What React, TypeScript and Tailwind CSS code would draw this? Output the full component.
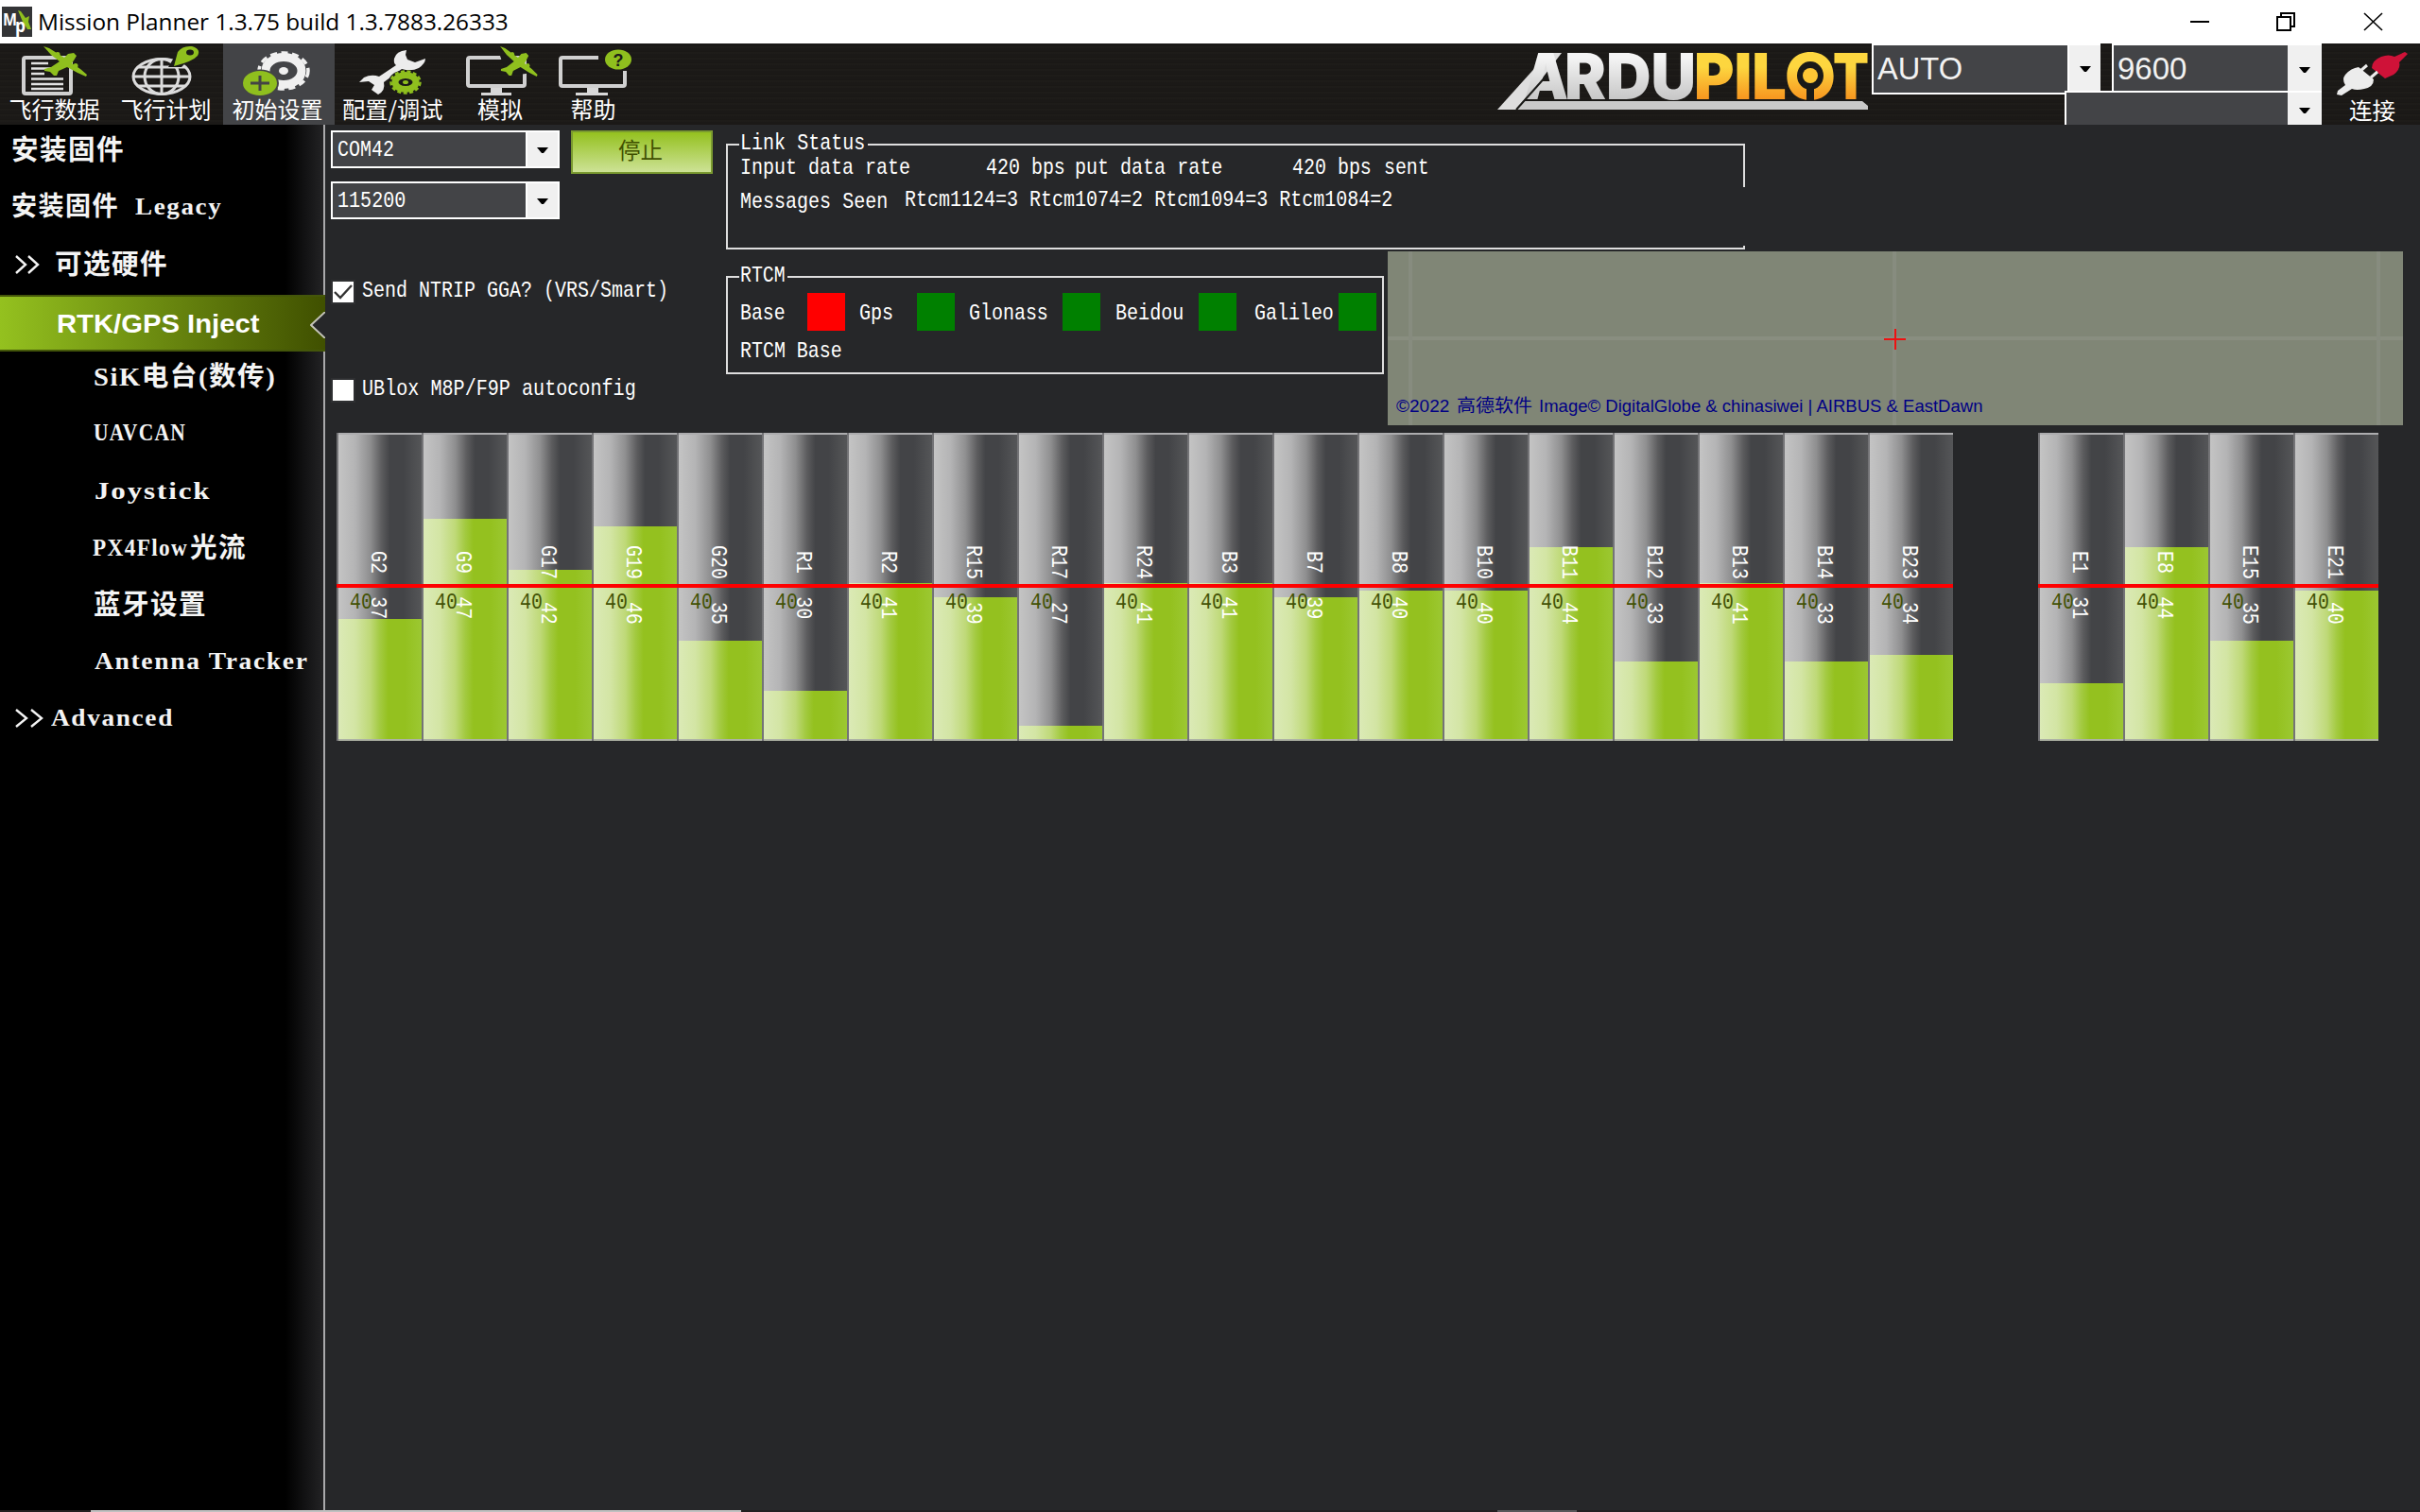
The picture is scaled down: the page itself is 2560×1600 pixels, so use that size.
import React, { useLayoutEffect, useRef, useState } from "react";

/* Single line of text squeezed or stretched to a given width. */
function Fit({ w, children, className = "" }: { w: number; children: string; className?: string }) {
  const ref = useRef<HTMLSpanElement>(null);
  const [scale, setScale] = useState(1);
  useLayoutEffect(() => {
    if (ref.current && ref.current.offsetWidth) setScale(w / ref.current.offsetWidth);
  }, [w, children]);
  return (
    <span className={"block shrink-0 whitespace-pre " + className} style={{ width: w }}>
      <span ref={ref} className="inline-block origin-left align-top" style={{ transform: `scaleX(${scale})` }}>
        {children}
      </span>
    </span>
  );
}

const MONO = "font-['Liberation_Mono','Noto_Sans_CJK_SC',monospace] text-[24px] leading-[24px] h-[24px]";

function Mono({ w, children, className = "text-white" }: { w: number; children: string; className?: string }) {
  return <Fit w={w} className={MONO + " " + className}>{children}</Fit>;
}

/* ---------- icons ---------- */

function Plane() {
  return (
    <g fill="#8fbf1e">
      <path d="M28 2 L34 4 L50 14 L54 10 L60 9 L63 12 L60 17 L58 20 L67 26 L74 32 L73 34 L64 30 L53 24 L44 28 L42 33 L39 33 L35 29 L29 28 L29 26 L36 24 L45 18 L36 11 Z" />
      <circle cx="43" cy="10.500" r="2.500" />
      <circle cx="62" cy="22.500" r="2.500" />
    </g>
  );
}

function FlightDataIcon() {
  return (
    <svg width="80" height="56" viewBox="0 0 80 56">
      <rect x="7" y="14" width="50" height="38" rx="2" fill="none" stroke="#d0d0d0" strokeWidth="4" />
      <path d="M15 20h18M15 25.500h22M15 31h14M15 36.500h34M15 42h34M15 47h34" stroke="#e2e2e2" strokeWidth="2.400" />
      <Plane />
    </svg>
  );
}

function FlightPlanIcon() {
  return (
    <svg width="80" height="56" viewBox="0 0 80 56">
      <g fill="none" stroke="#dcdcdc" strokeWidth="3">
        <ellipse cx="35" cy="34" rx="30" ry="18.500" />
        <ellipse cx="35" cy="34" rx="18" ry="18.500" />
        <path d="M35 15v38M5 34h60M10 24h50M10 44h50" />
      </g>
      <path d="M42 24 L51 9 L66 14 L56 24Z" fill="#1a1a18" />
      <path d="M48 23 L52 8 Q57 1 67 2 Q77 5 73 12 Q68 18 48 23Z" fill="#8fbf1e" />
      <ellipse cx="65" cy="8.500" rx="4" ry="3" fill="#1a1a18" />
    </svg>
  );
}

function SetupIcon() {
  return (
    <svg width="80" height="56" viewBox="0 0 80 56">
      <ellipse cx="46" cy="28" rx="19" ry="14.500" fill="none" stroke="#f0f0f0" strokeWidth="9" />
      <ellipse cx="46" cy="28" rx="26" ry="19" fill="none" stroke="#f0f0f0" strokeWidth="3.500" strokeDasharray="7 4.500" />
      <ellipse cx="46" cy="28" rx="5" ry="4" fill="#f0f0f0" />
      <ellipse cx="21" cy="41" rx="20" ry="14.500" fill="#434445" />
      <ellipse cx="21" cy="41" rx="18" ry="13" fill="#8fbf1e" />
      <path d="M21 33v16M11 41h20" stroke="#434445" strokeWidth="3" />
    </svg>
  );
}

function ConfigIcon() {
  return (
    <svg width="80" height="56" viewBox="0 0 80 56">
      <path
        d="M55 6 Q44 7 42 15 Q41 20 44 22 L26 34 Q18 31 10 35 L5 40 L15 39 L21 43 L18 48 L25 53 Q33 49 31 40 L50 26 Q60 29 68 25 Q75 20 75 15 L64 19 L56 16 L54 11Z"
        fill="#ececec"
      />
      <ellipse cx="54" cy="40" rx="18" ry="13" fill="#1a1a18" />
      <ellipse cx="54" cy="40" rx="11" ry="7.500" fill="none" stroke="#8fbf1e" strokeWidth="7" />
      <ellipse cx="54" cy="40" rx="15.500" ry="11.500" fill="none" stroke="#8fbf1e" strokeWidth="2.500" strokeDasharray="4 2.500" />
      <ellipse cx="54" cy="40" rx="3" ry="2" fill="#8fbf1e" />
    </svg>
  );
}

function Monitor() {
  return (
    <g>
      <rect x="6" y="14" width="60" height="30" rx="2" fill="none" stroke="#d0d0d0" strokeWidth="4" />
      <path d="M30 46h12v5h10v3H20v-3h10z" fill="#d8d8d8" />
    </g>
  );
}

function SimulationIcon() {
  return (
    <svg width="80" height="56" viewBox="0 0 80 56" className="overflow-visible">
      <Monitor />
      <path d="M40 12 L52 10 L74 30 L60 32 L46 30 Z" fill="#1a1a18" />
      <g transform="translate(16 0) scale(0.860 1)"><Plane /></g>
    </svg>
  );
}

function HelpIcon() {
  return (
    <svg width="86" height="56" viewBox="0 0 86 56">
      <g transform="translate(2 0)">
        <path d="M46 14H8Q6 14 6 16V42Q6 44 8 44H72Q74 44 74 42V28" fill="none" stroke="#d0d0d0" strokeWidth="4" />
        <path d="M34 46h12v5h10v3H22v-3h12z" fill="#d8d8d8" />
      </g>
      <ellipse cx="69" cy="16" rx="14" ry="10.500" fill="#8fbf1e" />
      <text x="69" y="22.500" textAnchor="middle" className="font-['Liberation_Sans',sans-serif] text-[18px] font-bold" fill="#1a1a18">?</text>
    </svg>
  );
}

function PlugIcon() {
  return (
    <svg width="82" height="48" viewBox="0 0 82 48">
      <path d="M76 1 L79 3 L70 12 Q72 19 64 25 L55 29 L41 18 Q41 10 51 6 Q59 3 65 6Z" fill="#cf1238" />
      <path d="M13 25 Q19 18 27 17 L43 30 Q43 38 33 40 Q25 42 20 40 L9 47 L4 46 L5 42 L13 36 Q9 30 13 25Z" fill="#ececec" />
      <path d="M29 21l7-6M40 28l7-6" stroke="#ececec" strokeWidth="3" />
    </svg>
  );
}

function ArduPilotLogo() {
  return (
    <svg width="400" height="86" viewBox="0 0 400 86" className="overflow-visible font-['Inter','Liberation_Sans',sans-serif] text-[67px] font-black">
      <defs>
        <linearGradient id="silver" gradientUnits="userSpaceOnUse" x1="0" y1="10" x2="0" y2="60">
          <stop offset="0.1" stopColor="#f4f4f4" />
          <stop offset="1" stopColor="#c6c6c6" />
        </linearGradient>
        <linearGradient id="gold" gradientUnits="userSpaceOnUse" x1="0" y1="10" x2="0" y2="60">
          <stop offset="0.3" stopColor="#fdd63f" />
          <stop offset="1" stopColor="#f7941e" />
        </linearGradient>
      </defs>
      <path d="M4 70 L58 10 H72 L52 36 L24 70Z" fill="#dedede" />
      <path d="M24 70 L33 61 H390 L396 66 V70Z" fill="#c9c9c9" />
      <g fill="url(#silver)">
        <text x="32" y="59" textLength="47" lengthAdjust="spacingAndGlyphs">A</text>
        <text x="75" y="59" textLength="139" lengthAdjust="spacingAndGlyphs">RDU</text>
      </g>
      <g fill="url(#gold)">
        <text x="212" y="59" textLength="98" lengthAdjust="spacingAndGlyphs">PIL</text>
        <text x="308" y="59" textLength="54" lengthAdjust="spacingAndGlyphs">O</text>
        <text x="359" y="59" textLength="38" lengthAdjust="spacingAndGlyphs">T</text>
      </g>
      <ellipse cx="335" cy="34" rx="14" ry="15" fill="#1a1a18" />
      <path d="M331 44h8v16h-8z" fill="#1a1a18" />
      <circle cx="335" cy="34" r="8" fill="#fdc735" />
      <path d="M24 70 L56 34" stroke="#1a1a18" strokeWidth="2" />
    </svg>
  );
}

function Arrow() {
  return (
    <svg width="12" height="6" viewBox="0 0 12 6"><path d="M0 0h12L7 6H5z" fill="#000" /></svg>
  );
}

/* ---------- toolbar ---------- */

const CJK_LABEL = "font-['Noto_Sans_CJK_SC',sans-serif] text-[24px] leading-[28px] text-white";

function Tool({ icon, label, w, tw, active }: { icon: React.ReactNode; label: string; w: number; tw: number; active?: boolean }) {
  return (
    <div className={"flex h-full shrink-0 flex-col items-center pr-[3px] pt-px " + (active ? "bg-[#434447]" : "")} style={{ width: w }}>
      <div>{icon}</div>
      <Fit w={tw} className={CJK_LABEL + " h-[28px] -mt-[2px]"}>{label}</Fit>
    </div>
  );
}

function Toolbar() {
  return (
    <div className="flex h-[86px] shrink-0 bg-[#1b1917] bg-[repeating-linear-gradient(0deg,#1b1917_0px,#1b1917_3px,#201e1b_4px,#181614_6px)]">
      <Tool icon={<FlightDataIcon />} label="飞行数据" w={118} tw={96} />
      <Tool icon={<FlightPlanIcon />} label="飞行计划" w={118} tw={96} />
      <Tool icon={<SetupIcon />} label="初始设置" w={118} tw={96} active />
      <Tool icon={<ConfigIcon />} label="配置/调试" w={125} tw={106} />
      <Tool icon={<SimulationIcon />} label="模拟" w={103} tw={48} />
      <Tool icon={<HelpIcon />} label="帮助" w={94} tw={48} />
      <div className="ml-auto flex">
        <ArduPilotLogo />
        <div className="grid w-[476px] grid-cols-[204px_50px_222px] grid-rows-[50px_36px]">
          <div className="col-span-2 flex h-[54px] w-[242px] border-2 border-r-0 border-white bg-[#434447]">
            <Fit w={90} className="ml-1 mt-[7px] h-[36px] font-['Liberation_Sans',sans-serif] text-[33px] leading-[36px] text-[#f2f2f2]">AUTO</Fit>
            <div className="ml-auto flex w-[35px] items-center justify-center border-l-2 border-white bg-[#f0f0f0]"><Arrow /></div>
          </div>
          <div className="flex border-2 border-b-0 border-r-0 border-white bg-[#434447]">
            <Fit w={73} className="ml-1 mt-[7px] h-[36px] font-['Liberation_Sans',sans-serif] text-[33px] leading-[36px] text-[#f2f2f2]">9600</Fit>
            <div className="ml-auto flex w-[36px] items-center justify-center bg-[#f0f0f0] pt-1"><Arrow /></div>
          </div>
          <div />
          <div className="relative col-span-2 flex border-l-2 border-t-2 border-white bg-[#434447]">
            <div className="ml-auto flex w-[36px] items-center justify-center bg-[#f0f0f0] pt-1"><Arrow /></div>
          </div>
        </div>
        <div className="flex w-[104px] flex-col items-center pl-[2px] pt-2">
          <PlugIcon />
          <Fit w={49} className={CJK_LABEL + " h-[28px]"}>连接</Fit>
        </div>
      </div>
    </div>
  );
}

function TitleBar() {
  return (
    <div className="flex h-[46px] shrink-0 items-center bg-white">
      <svg width="32" height="32" viewBox="0 0 32 32" className="ml-[2px] mr-[6px]">
        <rect width="32" height="32" fill="#333436" />
        <path d="M17 4 L20 5 L25 12 L29 10 L28 16 L31 24 L27 24 L22 16Z" fill="#8fbf1e" />
        <text x="1" y="20" className="font-['Open_Sans',sans-serif] text-[18px] font-bold" textLength="15" lengthAdjust="spacingAndGlyphs" fill="#fff">M</text>
        <text x="14" y="27" className="font-['Open_Sans',sans-serif] text-[20px] font-bold" textLength="11" lengthAdjust="spacingAndGlyphs" fill="#fff">p</text>
      </svg>
      <Fit w={498} className="h-[32px] font-['Open_Sans',sans-serif] text-[24px] leading-[32px] text-black">Mission Planner 1.3.75 build 1.3.7883.26333</Fit>
      <svg width="204" height="20" viewBox="0 0 204 20" className="ml-auto mr-[39px]" fill="none" stroke="#000" strokeWidth="2">
        <path d="M0 10h20" />
        <path d="M92 5h14v14H92zM96 5V1h14v14h-4" />
        <path d="M184 1l19 18M203 1l-19 18" strokeWidth="1.600" />
      </svg>
    </div>
  );
}

/* ---------- sidebar ---------- */

const SIDE = "font-['Liberation_Serif','Noto_Sans_CJK_SC',serif] font-bold leading-[34px] h-[34px] text-[#f4f4f4] tracking-[1.5px]";

function Side({ x, w, children, className = "h-[60px]", size = "text-[25px]" }: { x: number; w: number; children: string; className?: string; size?: string }) {
  return (
    <div className={"flex items-center " + className} style={{ paddingLeft: x }}>
      <Fit w={w} className={SIDE + " " + size}>{children}</Fit>
    </div>
  );
}

function Chevrons() {
  return (
    <svg width="26" height="20" viewBox="0 0 26 20" fill="none" stroke="#f4f4f4" strokeWidth="2.400"><path d="M1 1l10 9-10 9M14 1l10 9-10 9" /></svg>
  );
}

function Sidebar() {
  return (
    <div className="w-[344px] shrink-0 border-r-2 border-[#a9a9ab] bg-[linear-gradient(90deg,#000_0px,#000_302px,#232325_342px)]">
      <Side x={12} w={120} className="h-[54px]" size="text-[29px]">安装固件</Side>
      <div className="flex h-[66px] items-center pl-[12px]">
        <Fit w={114} className={SIDE + " text-[28px]"}>安装固件</Fit>
        <Fit w={92} className={SIDE + " ml-[17px] text-[25px]"}>Legacy</Fit>
      </div>
      <div className="flex h-[60px] items-center pb-1 pl-4">
        <Chevrons />
        <Fit w={120} className={SIDE + " ml-4 text-[29px]"}>可选硬件</Fit>
      </div>
      <div className="relative h-[60px] w-[344px] border-y-2 border-[#44560a] bg-[linear-gradient(90deg,#94c11f,#405000)] pl-[60px] pt-[12px]">
        <Fit w={214} className="h-[34px] font-['Liberation_Sans',sans-serif] text-[28px] font-bold leading-[34px] text-white">RTK/GPS Inject</Fit>
        <svg className="absolute right-0 top-[16px]" width="16" height="28" viewBox="0 0 16 28"><path d="M16 0L1 14L16 28" fill="#262729" stroke="#c4c4b8" strokeWidth="2" /></svg>
      </div>
      <Side x={99} w={193} className="h-[54px]" size="text-[28px]">SiK电台(数传)</Side>
      <Side x={99} w={98} className="h-[64px]">UAVCAN</Side>
      <Side x={100} w={124}>Joystick</Side>
      <div className="flex h-[60px] items-center pl-[98px]">
        <Fit w={101} className={SIDE + " text-[25px]"}>PX4Flow</Fit>
        <Fit w={60} className={SIDE + " ml-[2px] text-[29px]"}>光流</Fit>
      </div>
      <Side x={99} w={120} size="text-[29px]">蓝牙设置</Side>
      <Side x={100} w={227}>Antenna Tracker</Side>
      <div className="flex h-[60px] items-center pl-4">
        <svg width="30" height="20" viewBox="0 0 30 20" fill="none" stroke="#f4f4f4" strokeWidth="2.400"><path d="M1 1l11 9-11 9M17 1l11 9-11 9" /></svg>
        <Fit w={130} className={SIDE + " ml-2 text-[25px]"}>Advanced</Fit>
      </div>
    </div>
  );
}

/* ---------- main panel ---------- */

function Combo({ text, w }: { text: string; w: number }) {
  return (
    <div className="flex h-[40px] w-[242px] border-2 border-white bg-[#434447] pl-[5px] pt-[7px]">
      <Mono w={w}>{text}</Mono>
      <div className="-mt-[7px] ml-auto flex w-[34px] items-center justify-center border-l-2 border-white bg-[#f0f0f0] pt-[2px]"><Arrow /></div>
    </div>
  );
}

function Check({ on, children, w }: { on?: boolean; children: string; w: number }) {
  return (
    <div className="flex h-[26px]">
      <div className="mt-[2px] h-[22px] w-[22px] bg-white outline-2 outline-[#2e2f31]">
        {on && <svg width="22" height="22" viewBox="0 0 22 22" fill="none" stroke="#333" strokeWidth="2.400"><path d="M2 11l6 6L20 4" /></svg>}
      </div>
      <div className="ml-[9px]"><Mono w={w}>{children}</Mono></div>
    </div>
  );
}

function LinkStatus() {
  return (
    <div className="relative h-[112px] w-[1078px] border-2 border-[#dedede] pl-[13px] pt-[12px]">
      <div className="absolute -top-[14px] left-[12px] bg-[#262729] pl-px pr-[3px]"><Mono w={132}>Link Status</Mono></div>
      <div className="absolute -right-[2px] top-[44px] h-[62px] w-[2px] bg-[#262729]" />
      <div className="flex">
        <Mono w={180}>Input data rate</Mono>
        <div className="ml-[80px]"><Mono w={84}>420 bps</Mono></div>
        <div className="ml-[10px]"><Mono w={156}>put data rate</Mono></div>
        <div className="ml-[74px]"><Mono w={84}>420 bps</Mono></div>
        <div className="ml-[13px]"><Mono w={48}>sent</Mono></div>
      </div>
      <div className="mt-[10px] flex">
        <div className="mt-[2px]"><Mono w={156}>Messages Seen</Mono></div>
        <div className="ml-[18px]"><Mono w={516}>Rtcm1124=3 Rtcm1074=2 Rtcm1094=3 Rtcm1084=2</Mono></div>
      </div>
    </div>
  );
}

function Lamp({ label, w, gap, ml, red }: { label: string; w: number; gap: number; ml: number; red?: boolean }) {
  return (
    <div className="flex items-center" style={{ marginLeft: ml }}>
      <div className="mt-1"><Mono w={w}>{label}</Mono></div>
      <div className={"h-[40px] w-[40px] " + (red ? "bg-[#ff0000]" : "bg-[#008000]")} style={{ marginLeft: gap }} />
    </div>
  );
}

function Rtcm() {
  return (
    <div className="relative mt-[26px] h-[104px] w-[696px] border-2 border-[#dedede] pl-[13px] pt-[16px]">
      <div className="absolute -top-[14px] left-[12px] bg-[#262729] pl-px pr-[2px]"><Mono w={48}>RTCM</Mono></div>
      <div className="flex">
        <Lamp label="Base" w={48} gap={23} ml={0} red />
        <Lamp label="Gps" w={36} gap={25} ml={15} />
        <Lamp label="Glonass" w={84} gap={15} ml={15} />
        <Lamp label="Beidou" w={72} gap={16} ml={16} />
        <Lamp label="Galileo" w={84} gap={5} ml={19} />
      </div>
      <div className="mt-[10px]"><Mono w={108}>RTCM Base</Mono></div>
    </div>
  );
}

function MapView() {
  return (
    <div className="relative ml-[4px] h-[184px] w-[1074px] overflow-hidden bg-[#808676]">
      <div className="absolute left-0 top-[90px] h-[4px] w-full bg-[#898e80]" />
      <div className="absolute left-[22px] top-0 h-full w-[4px] bg-[#878c7f]" />
      <div className="absolute left-[534px] top-0 h-full w-[4px] bg-[#878c7f]" />
      <div className="absolute left-[1046px] top-0 h-full w-[4px] bg-[#878c7f]" />
      <div className="absolute left-[525px] top-[92px] h-[2px] w-[23px] bg-[#ee1111]" />
      <div className="absolute left-[536px] top-[82px] h-[22px] w-[2px] bg-[#ee1111]" />
      <div className="absolute left-[9px] top-[152px] flex h-[24px] font-['Liberation_Sans','Noto_Sans_CJK_SC',sans-serif] text-[19px] leading-[24px] text-[#000084]">
        <Fit w={56}>©2022</Fit>
        <Fit w={80} className="ml-[8px]">高德软件</Fit>
        <Fit w={469} className="ml-[7px]">{"Image© DigitalGlobe & chinasiwei | AIRBUS & EastDawn"}</Fit>
      </div>
    </div>
  );
}

/* Satellite id, signal strength and the y at which its fill begins inside the 326px column. */
const SATS: ([string, number, number] | null)[] = [
  ["G2", 37, 197], ["G9", 47, 91], ["G17", 42, 145], ["G19", 46, 99], ["G20", 35, 220], ["R1", 30, 273], ["R2", 41, 159],
  ["R15", 39, 174], ["R17", 27, 310], ["R24", 41, 159], ["B3", 41, 159], ["B7", 39, 174], ["B8", 40, 167], ["B10", 40, 167],
  ["B11", 44, 121], ["B12", 33, 242], ["B13", 41, 159], ["B14", 33, 242], ["B23", 34, 235], null,
  ["E1", 31, 265], ["E8", 44, 121], ["E15", 35, 220], ["E21", 40, 167],
];

function SatBar({ id, snr, top }: { id: string; snr: number; top: number }) {
  const label = id + "  " + snr;
  return (
    <div className="relative h-[326px] w-[90px] shrink-0 border-l-2 border-[#747477]">
      <div className="h-full w-[88px] border-y-2 border-b-[#aeb3a4] border-t-[#acacae] bg-[linear-gradient(90deg,#c4c4c4_0%,#b4b4b5_20%,#8f8f90_38%,#5c5c5e_52%,#434447_62%,#434447_78%,#555658_100%)]">
        <div
          className="h-full w-full bg-[linear-gradient(90deg,#dbeab6_0%,#d3e5a4_20%,#bfd978_38%,#a3ca41_50%,#94c11f_60%,#94c11f_80%,#9cc832_100%)]"
          style={{ clipPath: `inset(${top - 2}px 0 0 0)` }}
        />
      </div>
      <div className="absolute left-0 top-[160px] h-[4px] w-[90px] -translate-x-[2px] bg-[#ff0000]" />
      <div className="absolute left-[12px] top-[168px]"><Mono w={24} className="text-[#425204]">40</Mono></div>
      <div className="absolute left-[40px] top-[160px] h-0 w-0">
        <div className="flex h-0 w-0 rotate-90 items-center justify-center pb-[2px]"><Mono w={label.length * 12}>{label}</Mono></div>
      </div>
    </div>
  );
}

export default function App() {
  return (
    <div className="flex h-[1600px] w-[2560px] flex-col overflow-hidden bg-[#262729]">
      <TitleBar />
      <Toolbar />
      <div className="flex min-h-0 flex-1">
        <Sidebar />
        <div className="flex-1">
          <div className="flex h-[318px]">
            <div className="w-[424px] pl-[6px] pt-[6px]">
              <div className="flex">
                <Combo text="COM42" w={60} />
                <div className="ml-[12px] flex h-[46px] w-[150px] justify-center border-2 border-[#7a9a30] bg-[linear-gradient(180deg,#94c11f,#cde296)] pr-[3px] pt-[3px]">
                  <Fit w={47} className="h-[30px] font-['Noto_Sans_CJK_SC',sans-serif] text-[24px] leading-[30px] text-[#405000]">停止</Fit>
                </div>
              </div>
              <div className="mt-[8px]"><Combo text="115200" w={72} /></div>
              <div className="ml-[2px] mt-[64px]"><Check on w={324}>Send NTRIP GGA? (VRS/Smart)</Check></div>
              <div className="ml-[2px] mt-[78px]"><Check w={290}>UBlox M8P/F9P autoconfig</Check></div>
            </div>
            <div className="pt-[20px]">
              <LinkStatus />
              <div className="mt-[2px] flex items-start">
                <Rtcm />
                <MapView />
              </div>
            </div>
          </div>
          <div className="ml-[12px] mt-[8px] flex">
            {SATS.map((s, i) =>
              s ? <SatBar key={s[0]} id={s[0]} snr={s[1]} top={s[2]} /> : <div key={i} className="w-[90px] shrink-0" />
            )}
          </div>
        </div>
      </div>
      <div className="flex h-[2px] shrink-0 bg-[#231f20]">
        <div className="ml-[96px] w-[688px] bg-[#c0c0c0]" />
        <div className="ml-[800px] w-[84px] bg-[#58585a]" />
      </div>
    </div>
  );
}
